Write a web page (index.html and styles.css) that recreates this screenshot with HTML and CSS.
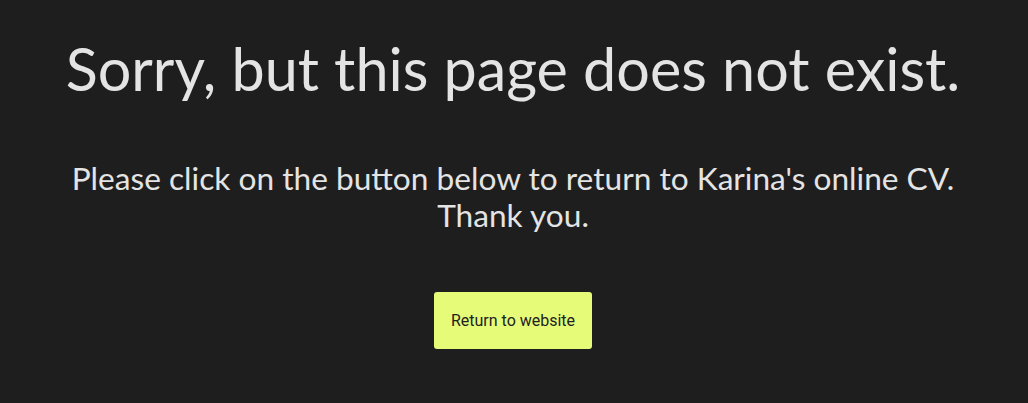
FILE: index.html
```html
<!DOCTYPE html>
<html lang="en">
<head>
<meta charset="utf-8">
<title>Page not found</title>
<link rel="stylesheet" href="styles.css">
</head>
<body>
<main class="notfound">
  <h1 class="notfound__title">Sorry, but this page does not exist.</h1>
  <p class="notfound__text">Please click on the button below to return to Karina's online CV.<br>Thank you.</p>
  <a class="notfound__button" href="#">Return to website</a>
</main>
</body>
</html>
```

FILE: styles.css
```css
html, body {
  margin: 0;
  padding: 0;
  background: #1e1e1e;
}
body {
  height: 403px;
  overflow: hidden;
  font-family: Lato, "Liberation Sans", sans-serif;
  color: #e4e4e4;
}
.notfound {
  display: flex;
  flex-direction: column;
  align-items: center;
  text-align: center;
  padding: 32px 2px 0 0;
}
.notfound__title {
  margin: 0;
  font-size: 59.3px;
  font-weight: 400;
  line-height: 72px;
}
.notfound__text {
  margin: 56px 0 0;
  font-size: 31.65px;
  font-weight: 400;
  line-height: 37px;
}
.notfound__button {
  margin-top: 58px;
  display: flex;
  align-items: center;
  justify-content: center;
  width: 158px;
  height: 57px;
  background: #e6fb77;
  color: #222;
  border-radius: 3px;
  text-decoration: none;
  font-family: Roboto, "Liberation Sans", sans-serif;
  font-size: 16px;
}
```
